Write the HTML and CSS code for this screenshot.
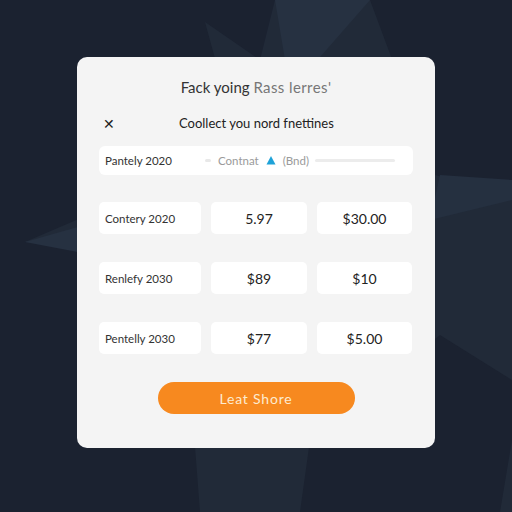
FILE: index.html
```html
<!DOCTYPE html>
<html>
<head>
	<title>Collect</title>
	<link rel="stylesheet" href="styles.css">
</head>
<body>

<svg class="bg" width="512" height="512" viewBox="0 0 512 512">
	<polygon points="205,22 240,150 25,242 180,250 200,512 300,512 310,440 440,335 512,380 512,440 500,512 512,512 512,195 435,175 370,0 275,0 260,60" fill="#212a38"/>
	<polygon points="275,0 370,0 300,80 285,60" fill="#263141"/>
	<polygon points="440,175 512,180 512,200 430,220" fill="#253040"/>
	<polygon points="25,242 120,215 120,260" fill="#263141"/>
</svg>

<div class="card">
	<h1 class="title">Fack yoing <span>Rass lerres'</span></h1>

	<div class="head">
		<span class="close">&#x2715;</span>
		<span class="head-text">Coollect you nord fnettines</span>
	</div>

	<div class="search">
		<span class="search-label">Pantely 2020</span>
		<span class="dash"></span>
		<span class="muted">Contnat</span>
		<svg class="tri" width="10" height="10" viewBox="0 0 10 10"><polygon points="5,1 9.5,9.5 0.5,9.5" fill="#1ea2d8"/></svg>
		<span class="muted">(Bnd)</span>
		<span class="track"></span>
	</div>

	<div class="grid">
		<div class="cell name">Contery 2020</div>
		<div class="cell">5.97</div>
		<div class="cell">$30.00</div>

		<div class="cell name">Renlefy 2030</div>
		<div class="cell">$89</div>
		<div class="cell">$10</div>

		<div class="cell name">Pentelly 2030</div>
		<div class="cell">$77</div>
		<div class="cell">$5.00</div>
	</div>

	<button class="btn">Leat Shore</button>
</div>

</body>
</html>
```

FILE: styles.css
```css
body {
	margin: 0;
	width: 512px;
	height: 512px;
	background-color: #1b2230;
	font-family: "Lato", "Open Sans", sans-serif;
	position: relative;
	overflow: hidden;
	display: flex;
	align-items: flex-start;
	justify-content: center;
}

.bg {
	position: absolute;
	left: 0;
	top: 0;
}

.card {
	position: relative;
	margin-top: 57px;
	width: 358px;
	height: 391px;
	box-sizing: border-box;
	background-color: #f4f4f4;
	border-radius: 10px;
	padding: 0 22px;
	display: flex;
	flex-direction: column;
}

.title {
	margin: 19px 0 0;
	font-size: 15px;
	font-weight: 400;
	color: #333;
	text-align: center;
	height: 22px;
	line-height: 22px;
}

.title span {
	color: #777;
	letter-spacing: 0.4px;
}

.head {
	margin-top: 15px;
	height: 20px;
	display: flex;
	align-items: center;
}

.close {
	width: 80px;
	padding-left: 4px;
	box-sizing: border-box;
	font-size: 14px;
	color: #222;
}

.head-text {
	font-size: 13px;
	color: #222;
}

.search {
	margin-top: 13px;
	height: 29px;
	background-color: #fff;
	border-radius: 6px;
	display: flex;
	align-items: center;
	padding: 0 6px;
	font-size: 11.5px;
}

.search-label {
	color: #333;
	width: 100px;
}

.dash {
	width: 6px;
	height: 3px;
	border-radius: 2px;
	background-color: #e8e8e8;
	margin-right: 7px;
}

.muted {
	color: #9a9a9a;
}

.tri {
	margin: 0 7px 2px;
}

.track {
	margin-left: 6px;
	width: 80px;
	height: 3px;
	border-radius: 2px;
	background-color: #ececec;
}

.grid {
	margin-top: 27px;
	display: grid;
	grid-template-columns: 102px 96px 95px;
	column-gap: 10px;
	row-gap: 28px;
}

.cell {
	height: 32px;
	background-color: #fff;
	border-radius: 5px;
	display: flex;
	align-items: center;
	justify-content: center;
	font-size: 14px;
	color: #222;
}

.cell.name {
	justify-content: flex-start;
	padding-left: 6px;
	font-size: 11.5px;
	color: #333;
}

.btn {
	margin: 28px auto 0;
	width: 197px;
	height: 32px;
	border: none;
	border-radius: 16px;
	background-color: #f7891f;
	color: #fdebd0;
	font-family: "Lato", sans-serif;
	font-size: 14px;
	letter-spacing: 0.8px;
}
```
